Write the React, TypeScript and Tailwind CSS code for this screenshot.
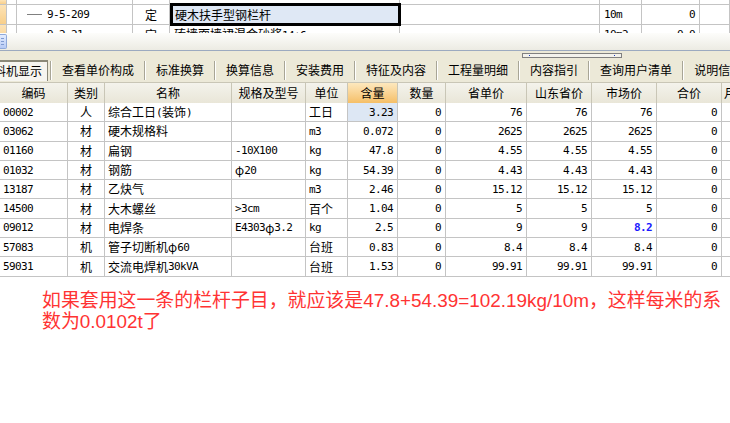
import React from "react";

const MONO = "font-['DejaVu_Sans_Mono',monospace] text-[11px] tracking-[-0.6px]";

function Txt({ s }: { s: string }) {
  const parts = s.split(/([\x20-\x7e]+)/).filter((p) => p !== "");
  return (
    <>
      {parts.map((p, i) =>
        /^[\x20-\x7e]+$/.test(p) ? (
          <span key={i} className={MONO}>
            {p}
          </span>
        ) : (
          <span key={i}>{p}</span>
        )
      )}
    </>
  );
}

const rows: string[][] = [
  ["00002", "人", "综合工日(装饰)", "", "工日", "3.23", "0", "76", "76", "76", "0"],
  ["03062", "材", "硬木规格料", "", "m3", "0.072", "0", "2625", "2625", "2625", "0"],
  ["01160", "材", "扁钢", "-10X100", "kg", "47.8", "0", "4.55", "4.55", "4.55", "0"],
  ["01032", "材", "钢筋", "φ20", "kg", "54.39", "0", "4.43", "4.43", "4.43", "0"],
  ["13187", "材", "乙炔气", "", "m3", "2.46", "0", "15.12", "15.12", "15.12", "0"],
  ["14500", "材", "大木螺丝", ">3cm", "百个", "1.04", "0", "5", "5", "5", "0"],
  ["09012", "材", "电焊条", "E4303φ3.2", "kg", "2.5", "0", "9", "9", "8.2", "0"],
  ["57083", "机", "管子切断机φ60", "", "台班", "0.83", "0", "8.4", "8.4", "8.4", "0"],
  ["59031", "机", "交流电焊机30kVA", "", "台班", "1.53", "0", "99.91", "99.91", "99.91", "0"],
];

const headers = ["编码", "类别", "名称", "规格及型号", "单位", "含量", "数量", "省单价", "山东省价", "市场价", "合价", "月"];

const GRID = "grid grid-cols-[68px_37px_127px_74px_42px_50px_48px_81px_65px_65px_65px_40px]";

const tabs = ["查看单价构成", "标准换算", "换算信息", "安装费用", "特征及内容", "工程量明细", "内容指引", "查询用户清单", "说明信息"];

function UpperRow({ h, cells }: { h: string; cells: React.ReactNode[] }) {
  return (
    <div className={`grid grid-cols-[7px_10px_116px_37px_230px_200px_42px_58px_30px] border-b border-[#c4c4c4] ${h}`}>
      {cells.map((c, i) => (
        <div
          key={i}
          className={`border-r border-[#c4c4c4] overflow-hidden whitespace-nowrap flex items-center ${
            i === 0 ? "bg-gradient-to-b from-[#fde3b6] to-[#f8cf8a]" : ""
          }`}
        >
          {c}
        </div>
      ))}
    </div>
  );
}

export default function App() {
  return (
    <div className="w-[730px] h-[423px] overflow-hidden bg-white text-black text-[12px] leading-none font-['Noto_Sans_CJK_SC',sans-serif]">
      {/* upper grid */}
      <div className="relative h-[33px] overflow-hidden">
        <UpperRow h="h-[5px]" cells={["", "", "", "", "", "", "", "", ""]} />
        <UpperRow
          h="h-[20px]"
          cells={[
            "",
            "",
            <div className="flex items-center w-full">
              <div className="ml-[10px] w-[15px] h-px bg-[#808080]" />
              <span className={`${MONO} ml-[5px]`}>9-5-209</span>
            </div>,
            <span className="w-full text-center">定</span>,
            "",
            "",
            <span className={`${MONO} ml-[4px]`}>10m</span>,
            <span className={`${MONO} w-full text-right pr-[4px]`}>0</span>,
            "",
          ]}
        />
        <UpperRow
          h="h-[20px]"
          cells={[
            "",
            "",
            <span className={`${MONO} ml-[30px]`}>9-2-21</span>,
            <span className="w-full text-center">定</span>,
            <span className="ml-[4px]">
              <Txt s="砖墙面墙裙混合砂浆14+6" />
            </span>,
            "",
            <span className={`${MONO} ml-[4px]`}>10m2</span>,
            <span className={`${MONO} w-full text-right pr-[4px]`}>0.0</span>,
            "",
          ]}
        />
        {/* selected cell */}
        <div className="absolute left-[170px] top-[3px] w-[231px] h-[23px] border-[3px] border-black bg-[#dfe8f5] flex items-center pl-[2px]">
          硬木扶手型钢栏杆
        </div>
      </div>

      {/* horizontal scroll strip */}
      <div className="h-[17px] bg-gradient-to-b from-[#fdfdfb] to-[#ecebe3] flex items-center">
        <div className="w-[7px] h-[15px] rounded-r-[2px] border border-l-0 border-[#8fa9da] bg-gradient-to-b from-[#e4ecfd] to-[#b7cbf5] flex flex-col justify-center gap-[2px] pl-[1px]">
          <div className="w-[3px] h-px bg-[#7f9bd1]" />
          <div className="w-[3px] h-px bg-[#7f9bd1]" />
          <div className="w-[3px] h-px bg-[#7f9bd1]" />
        </div>
      </div>
      <div className="h-px bg-[#9caac0]" />

      {/* splitter */}
      <div className="h-[7px] bg-[#ece9d8] flex items-end">
        <div className="ml-[522px] w-[100px] h-[5px] border border-[#808080] bg-[#f3f2ec] flex items-center justify-between px-[6px]">
          <div className="w-px h-px bg-[#2040c0]" />
          <div className="w-px h-px bg-[#2040c0]" />
        </div>
      </div>

      {/* tabs */}
      <div className="h-[24px] bg-[#ece9d8] flex items-center whitespace-nowrap overflow-hidden">
        <div className="h-[21px] w-[48px] shrink-0 border-t-2 border-r border-t-[#8a8878] border-r-[#8a8878] bg-[#f6f5f0] flex items-center justify-end pr-[5px] overflow-hidden">
          <span className="whitespace-nowrap">工料机显示</span>
        </div>
        <div className="w-[2px] shrink-0" />
        {tabs.map((t, i) => (
          <div key={i} className="flex items-center shrink-0">
            <div className="w-px h-[19px] bg-[#a8a596]" />
            <div className="w-px h-[19px] bg-white" />
            <span className="px-[10px]">{t}</span>
          </div>
        ))}
      </div>

      {/* table header */}
      <div className={`${GRID} h-[21px] border-t border-[#c9c6b6] bg-gradient-to-b from-[#f4f3ec] to-[#e9e6d8]`}>
        {headers.map((h, i) => (
          <div
            key={i}
            className={`flex items-center justify-center border-r border-[#c9c6b6] overflow-hidden whitespace-nowrap ${
              i === 5 ? "bg-gradient-to-b from-[#fde8bd] to-[#f5bf66]" : ""
            } ${i === 11 ? "justify-start pl-[2px]" : ""}`}
          >
            {h}
          </div>
        ))}
      </div>

      {/* table body */}
      {rows.map((r, ri) => (
        <div key={ri} className={`${GRID} h-[19.3px]`}>
          {r.map((c, ci) => {
            const right = ci >= 5;
            const center = ci === 1;
            const blue = ri === 6 && ci === 9;
            return (
              <div
                key={ci}
                className={`border-r border-b border-[#c4c4c4] flex items-center overflow-hidden whitespace-nowrap ${
                  right ? "justify-end pr-[4px]" : center ? "justify-center" : "pl-[3px]"
                } ${ri === 0 && ci === 5 ? "bg-[#dde7f4]" : ""} ${blue ? "text-[#1a1aff] font-bold" : ""}`}
              >
                <Txt s={c} />
              </div>
            );
          })}
          <div className="border-r border-b border-[#c4c4c4]" />
        </div>
      ))}

      {/* red note */}
      <div className="pt-[13px] pl-[42px] text-[18.9px] leading-[21px] text-[#ff3333] whitespace-nowrap font-['Liberation_Sans','Noto_Sans_CJK_SC',sans-serif]">
        如果套用这一条的栏杆子目，就应该是47.8+54.39=102.19kg/10m，这样每米的系
        <br />
        数为0.0102t了
      </div>
    </div>
  );
}
